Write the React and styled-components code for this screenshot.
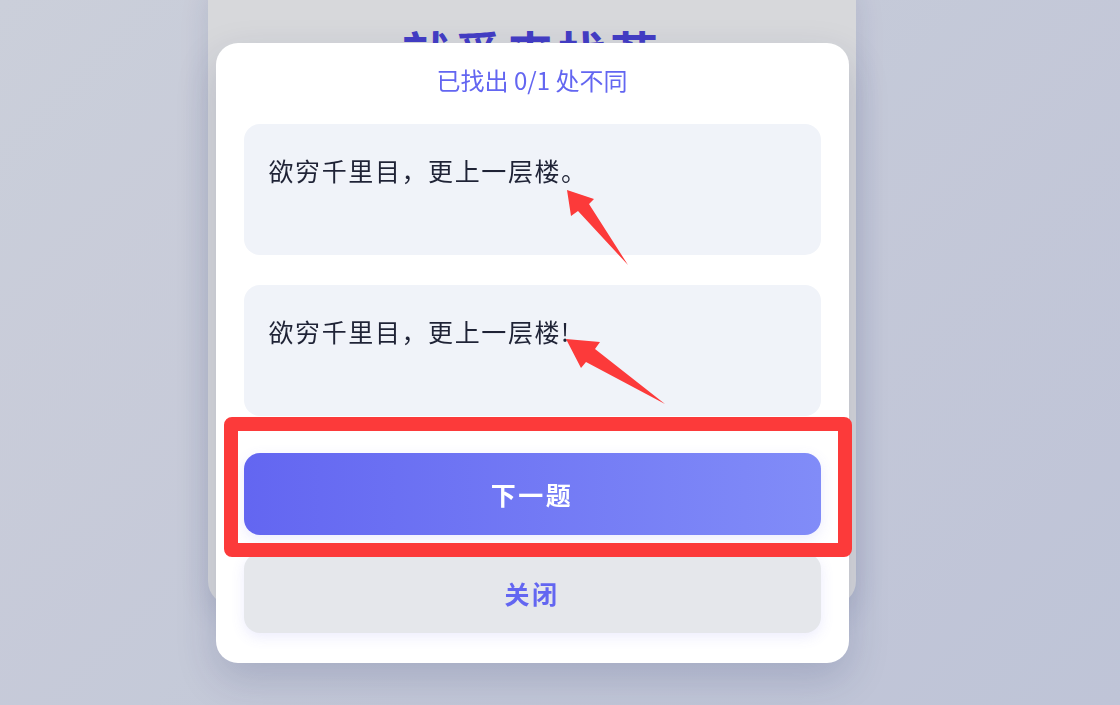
import React from 'react';
import styled, { createGlobalStyle } from 'styled-components';

const GlobalStyle = createGlobalStyle`
  html, body {
    margin: 0;
    padding: 0;
    height: 100%;
    overflow: hidden;
  }
  body {
    font-family: "Noto Sans CJK SC", "Noto Sans", sans-serif;
    background: linear-gradient(135deg, #f1f4fe 0%, #e2e7fb 100%);
  }
`;

const Page = styled.div`
  width: 1064px;
  height: 705px;
  display: flex;
  justify-content: center;
`;

const Card = styled.div`
  width: 648px;
  height: 629px;
  margin-top: -24px;
  box-sizing: border-box;
  padding-top: 46px;
  background: #fff;
  border-radius: 24px;
  box-shadow: 0 10px 30px rgba(30, 41, 90, 0.12);
  text-align: center;
`;

const Title = styled.h1`
  margin: 0;
  font-size: 48px;
  line-height: 58px;
  font-weight: 700;
  letter-spacing: 4px;
  color: #4f46e5;
`;

const Backdrop = styled.div`
  position: fixed;
  inset: 0;
  padding-right: 56px;
  background: rgba(17, 24, 39, 0.17);
  display: flex;
  align-items: center;
  justify-content: center;
`;

const Modal = styled.section`
  position: relative;
  width: 633px;
  height: 620px;
  box-sizing: border-box;
  padding: 20px 28px 30px;
  background: #fff;
  border-radius: 22px;
  box-shadow: 0 16px 40px rgba(30, 41, 90, 0.18);
  display: flex;
  flex-direction: column;
`;

const Progress = styled.div`
  text-align: center;
  font-size: 24px;
  line-height: 34px;
  color: #6366f1;
  margin-bottom: 27px;
`;

const Verse = styled.div`
  box-sizing: border-box;
  min-height: 131px;
  padding: 28px 25px;
  margin-bottom: ${(p) => p.gap}px;
  background: #f0f3f9;
  border-radius: 16px;
  font-size: 25px;
  line-height: 36px;
  letter-spacing: 1.6px;
  color: #1f2336;
`;

const Button = styled.button`
  display: block;
  width: 100%;
  height: ${(p) => (p.primary ? 82 : 80)}px;
  margin-bottom: ${(p) => (p.primary ? 18 : 0)}px;
  border: 0;
  border-radius: 16px;
  font-family: inherit;
  font-size: 25px;
  font-weight: 700;
  letter-spacing: 2.5px;
  cursor: pointer;
  color: ${(p) => (p.primary ? '#fff' : '#6366f1')};
  background: ${(p) =>
    p.primary ? 'linear-gradient(90deg, #6366f1 0%, #818cf8 100%)' : '#e5e7eb'};
  box-shadow: 0 4px 14px rgba(99, 102, 241, 0.12);
`;

const Highlight = styled.div`
  position: absolute;
  left: 8px;
  top: 374px;
  width: 628px;
  height: 140px;
  box-sizing: border-box;
  border: 14px solid #fc3a3a;
  border-radius: 8px;
  pointer-events: none;
`;

const Marks = styled.svg`
  position: absolute;
  left: 0;
  top: 0;
  pointer-events: none;
`;

// 标注箭头 (modal 坐标)
const arrows = [
  '351,147 378,156 373,161 412,222 362,168 355,173',
  '350,296 384,299 379,306 449,361 370,319 365,325',
];

export default function App() {
  return (
    <>
      <GlobalStyle />
      <Page>
        <Card>
          <Title>就爱来找茬</Title>
        </Card>
      </Page>
      <Backdrop>
        <Modal>
          <Progress>已找出 0/1 处不同</Progress>
          <Verse gap={30}>欲穷千里目，更上一层楼。</Verse>
          <Verse gap={37}>欲穷千里目，更上一层楼!</Verse>
          <Button primary>下一题</Button>
          <Button>关闭</Button>
          <Highlight />
          <Marks width="633" height="620" viewBox="0 0 633 620">
            {arrows.map((pts) => (
              <polygon key={pts} points={pts} fill="#fc3a3a" />
            ))}
          </Marks>
        </Modal>
      </Backdrop>
    </>
  );
}
